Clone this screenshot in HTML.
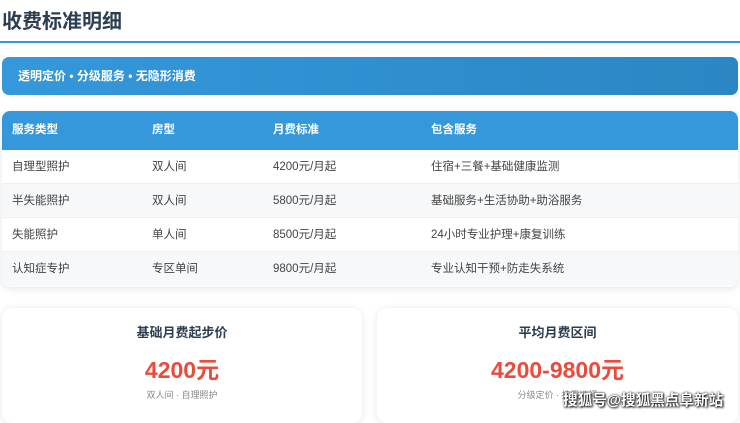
<!DOCTYPE html>
<html><head><meta charset="utf-8"><style>
*{margin:0;padding:0;box-sizing:border-box}
body{width:740px;height:415px;overflow:hidden;background:#fff;font-family:"Liberation Sans","Noto Sans CJK SC",sans-serif;position:relative}
.title{position:absolute;left:2px;top:5px;font-size:20px;font-weight:bold;color:#2c3e50}
.line{position:absolute;left:0;top:41px;width:740px;height:2px;background:#3498db}
.banner{position:absolute;left:2px;top:57px;width:736px;height:38px;border-radius:7px;background:linear-gradient(90deg,#3498db,#2c86c4);color:#fff;font-weight:bold;font-size:12px;line-height:38px;padding-left:16px}
.table{position:absolute;left:2px;top:111px;width:736px;height:176px;border-radius:8px;overflow:hidden;box-shadow:0 2px 8px rgba(0,0,0,.1);background:#fff}
.row{position:relative;height:34px;font-size:11.5px;color:#444;border-bottom:1px solid #eef0f2}
.row span{position:absolute;top:0;line-height:34px}
.hd{height:39px;background:#3498db;color:#fff;font-weight:bold;border:none}
.hd span{line-height:39px}
.alt{background:#f7f8fa}
.c1{left:10px}.c2{left:150px}.c3{left:271px}.c4{left:429px}
.card{position:absolute;top:308px;height:115px;border-radius:10px;background:#fff;box-shadow:0 1px 8px rgba(0,0,0,.1);text-align:center}
.ct{margin-top:14px;font-size:13px;font-weight:bold;color:#2c3e50}
.cp{margin-top:10px;font-size:23px;font-weight:bold;color:#e74c3c}
.cs{margin-top:3px;font-size:9px;color:#888}
.wm{position:absolute;left:563px;top:389px;font-size:14.6px;color:#fff;text-shadow:0 0 2px #000,1px 1px 2px #000;font-weight:bold}
</style></head><body>
<div class="title">收费标准明细</div>
<div class="line"></div>
<div class="banner">透明定价 • 分级服务 • 无隐形消费</div>
<div class="table">
<div class="row hd"><span class="c1">服务类型</span><span class="c2">房型</span><span class="c3">月费标准</span><span class="c4">包含服务</span></div>
<div class="row"><span class="c1">自理型照护</span><span class="c2">双人间</span><span class="c3">4200元/月起</span><span class="c4">住宿+三餐+基础健康监测</span></div>
<div class="row alt"><span class="c1">半失能照护</span><span class="c2">双人间</span><span class="c3">5800元/月起</span><span class="c4">基础服务+生活协助+助浴服务</span></div>
<div class="row"><span class="c1">失能照护</span><span class="c2">单人间</span><span class="c3">8500元/月起</span><span class="c4">24小时专业护理+康复训练</span></div>
<div class="row alt" style="border:none"><span class="c1">认知症专护</span><span class="c2">专区单间</span><span class="c3">9800元/月起</span><span class="c4">专业认知干预+防走失系统</span></div>
</div>
<div class="card" style="left:2px;width:360px"><div class="ct">基础月费起步价</div><div class="cp">4200元</div><div class="cs">双人间 · 自理照护</div></div>
<div class="card" style="left:377px;width:361px"><div class="ct">平均月费区间</div><div class="cp">4200-9800元</div><div class="cs">分级定价 · 按需选择</div></div>
<div class="wm">搜狐号@搜狐黑点阜新站</div>
</body></html>
